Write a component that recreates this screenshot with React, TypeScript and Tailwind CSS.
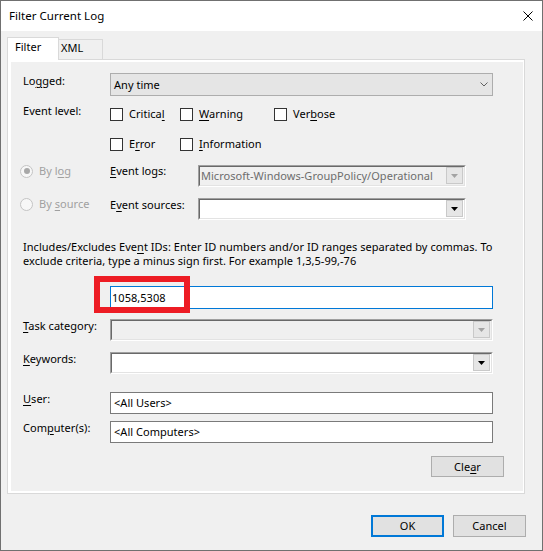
import React from "react";

function U({ children }: { children: React.ReactNode }) {
  return <span className="underline decoration-1 underline-offset-[2px]">{children}</span>;
}

function Checkbox({ children, w }: { children: React.ReactNode; w?: string }) {
  return (
    <div className={`flex h-[16px] items-center gap-[6px] ${w ?? ""}`}>
      <div className="h-[13px] w-[13px] shrink-0 border border-[#333333] bg-white" />
      <span className="leading-[16px]">{children}</span>
    </div>
  );
}

function Radio({ checked, children }: { checked?: boolean; children: React.ReactNode }) {
  return (
    <div className="flex h-[16px] w-[90px] items-center gap-[6px] text-[#a0a0a0]">
      <div className="flex h-[13px] w-[13px] shrink-0 items-center justify-center rounded-full border border-[#c4c4c4] bg-[#f7f7f7]">
        {checked && <div className="h-[6px] w-[6px] rounded-full bg-[#a8a8a8]" />}
      </div>
      <span className="leading-[16px]">{children}</span>
    </div>
  );
}

function Arrow({ disabled }: { disabled?: boolean }) {
  return (
    <svg width="7" height="4" viewBox="0 0 7 4" className="block">
      <polygon points="0,0 7,0 3.5,4" fill={disabled ? "#a3a3a3" : "#000000"} />
    </svg>
  );
}

function SunkenCombo({
  width,
  disabled,
  text,
}: {
  width: string;
  disabled?: boolean;
  text?: string;
}) {
  return (
    <div
      className={`h-[22px] ${width} shrink-0 border-t border-l border-b border-r border-t-[#a0a0a0] border-l-[#a0a0a0] border-b-white border-r-white`}
    >
      <div
        className={`flex h-full w-full border-t border-l border-b border-r border-t-[#696969] border-l-[#696969] border-b-[#e3e3e3] border-r-[#e3e3e3] ${
          disabled ? "bg-[#f0f0f0]" : "bg-white"
        }`}
      >
        <div className="flex min-w-0 flex-1 items-center overflow-hidden whitespace-nowrap pl-[1px] leading-[16px] text-[#6d6d6d]">
          {text}
        </div>
        <div className="mr-[1px] flex h-[17px] w-[17px] shrink-0 items-center justify-center border border-[#c9c9c9] bg-[#e6e6e6]">
          <Arrow disabled={disabled} />
        </div>
      </div>
    </div>
  );
}

function TextBox({ value }: { value: string }) {
  return (
    <div className="flex h-[22px] w-[383px] items-center border border-[#7a7a7a] bg-white pl-[3px] leading-[16px]">
      {value}
    </div>
  );
}

function Label({ children, className }: { children: React.ReactNode; className?: string }) {
  return <div className={`w-[87px] shrink-0 leading-[16px] ${className ?? ""}`}>{children}</div>;
}

export default function App() {
  return (
    <div className="flex h-[551px] w-[543px] flex-col border border-[#707070] bg-[#f0f0f0] font-['Noto_Sans','Open_Sans',sans-serif] text-[11px] leading-[16px] tracking-[0.03px] text-black">
      {/* Title bar */}
      <div className="flex h-[30px] shrink-0 items-center justify-between bg-white pl-[8px] pr-[9px]">
        <span className="text-[11.5px]">Filter Current Log</span>
        <svg width="10" height="10" viewBox="0 0 10 10" className="block">
          <path d="M0.5 0.5 L9.5 9.5 M9.5 0.5 L0.5 9.5" stroke="#000" strokeWidth="1" />
        </svg>
      </div>

      {/* Tabs */}
      <div className="ml-[6px] mt-[6px] flex h-[22px] items-end">
        <div className="relative z-10 mb-[-1px] h-[23px] w-[52px] border border-b-0 border-[#d9d9d9] bg-white pl-[7px] pt-[1px]">
          Filter
        </div>
        <div className="h-[20px] w-[44px] border border-b-0 border-l-0 border-[#d9d9d9] bg-[#f0f0f0] pl-[2px] pt-[0px]">
          XML
        </div>
      </div>

      {/* Panel */}
      <div className="ml-[6px] h-[435px] w-[518px] border border-[#d9d9d9] bg-white pb-[2px] pl-[3px] pr-[1px] pt-[2px]">
        <div className="flex h-full flex-col bg-[#f0f0f0]">
          {/* Logged */}
          <div className="mt-[11px] flex pl-[12px]">
            <Label>
              Lo<U>g</U>ged:
            </Label>
            <div className="flex h-[23px] w-[383px] items-center justify-between border border-[#adadad] bg-[#e5e5e5] pl-[3px] pr-[4px]">
              <span>Any time</span>
              <svg width="8" height="5" viewBox="0 0 8 5" className="block">
                <path d="M0.5 0.5 L4 4 L7.5 0.5" stroke="#606060" strokeWidth="1" fill="none" />
              </svg>
            </div>
          </div>

          {/* Event level */}
          <div className="mt-[7px] flex pl-[12px]">
            <Label>Event level:</Label>
            <div className="flex flex-col gap-[14px] pt-[3px]">
              <div className="flex">
                <Checkbox w="w-[70px]">
                  Critica<U>l</U>
                </Checkbox>
                <Checkbox w="w-[94px]">
                  <U>W</U>arning
                </Checkbox>
                <Checkbox>
                  Ver<U>b</U>ose
                </Checkbox>
              </div>
              <div className="flex">
                <Checkbox w="w-[70px]">
                  E<U>r</U>ror
                </Checkbox>
                <Checkbox>
                  <U>I</U>nformation
                </Checkbox>
              </div>
            </div>
          </div>

          {/* By log */}
          <div className="mt-[11px] flex h-[24px] pl-[9px]">
            <Radio checked>
              By l<U>o</U>g
            </Radio>
            <div className="w-[88px] shrink-0 leading-[16px]">
              <U>E</U>vent logs:
            </div>
            <div className="mt-[2px]">
              <SunkenCombo width="w-[268px]" disabled text="Microsoft-Windows-GroupPolicy/Operational" />
            </div>
          </div>

          {/* By source */}
          <div className="mt-[9px] flex h-[24px] pl-[9px]">
            <Radio>
              By <U>s</U>ource
            </Radio>
            <div className="mt-[1px] w-[88px] shrink-0 leading-[16px]">
              E<U>v</U>ent sources:
            </div>
            <div className="mt-[2px]">
              <SunkenCombo width="w-[268px]" />
            </div>
          </div>

          {/* Description */}
          <div className="mt-[20px] pl-[12px] leading-[14px]">
            Includes/Excludes Eve<U>n</U>t IDs: Enter ID numbers and/or ID ranges separated by commas. To
            <br />
            exclude criteria, type a minus sign first. For example 1,3,5-99,-76
          </div>

          {/* ID input */}
          <div className="mt-[18px] flex pl-[99px]">
            <div className="relative flex h-[23px] w-[383px] items-center border border-[#0078d7] bg-white pl-[1px]">
              1058,5308
              <div className="pointer-events-none absolute left-[-17px] top-[-11px] h-[37px] w-[96px] border-[6px] border-[#ed1c24]" />
            </div>
          </div>

          {/* Task category */}
          <div className="mt-[10px] flex pl-[12px]">
            <Label className="-mt-[1px]">
              <U>T</U>ask category:
            </Label>
            <SunkenCombo width="w-[383px]" disabled />
          </div>

          {/* Keywords */}
          <div className="mt-[11px] flex pl-[12px]">
            <Label className="-mt-[1px]">
              <U>K</U>eywords:
            </Label>
            <SunkenCombo width="w-[383px]" />
          </div>

          {/* User */}
          <div className="mt-[18px] flex pl-[12px]">
            <Label className="-mt-[1px]">
              <U>U</U>ser:
            </Label>
            <TextBox value="<All Users>" />
          </div>

          {/* Computer */}
          <div className="mt-[7px] flex pl-[12px]">
            <Label className="-mt-[1px]">
              Com<U>p</U>uter(s):
            </Label>
            <TextBox value="<All Computers>" />
          </div>

          {/* Clear */}
          <div className="mr-[19px] mt-[13px] flex justify-end">
            <div className="flex h-[21px] w-[73px] items-center justify-center border border-[#adadad] bg-[#e1e1e1]">
              Cle<U>a</U>r
            </div>
          </div>
        </div>
      </div>

      {/* Bottom buttons */}
      <div className="mr-[16px] mt-[21px] flex justify-end gap-[9px]">
        <div className="flex h-[22px] w-[73px] items-center justify-center border-2 border-[#0078d7] bg-[#e1e1e1]">
          OK
        </div>
        <div className="flex h-[22px] w-[73px] items-center justify-center border border-[#adadad] bg-[#e1e1e1]">
          Cancel
        </div>
      </div>
    </div>
  );
}
